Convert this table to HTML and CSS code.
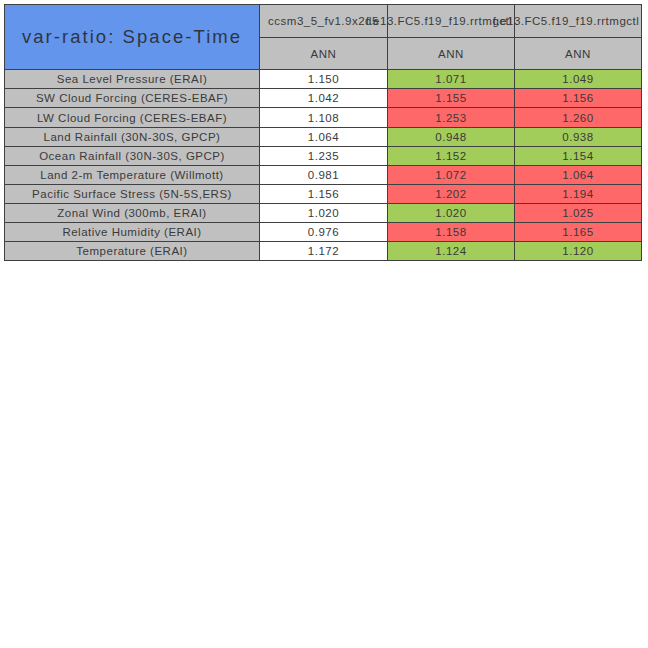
FILE: index.html
```html
<!DOCTYPE html>
<html>
<head>
<meta charset="utf-8">
<link rel="stylesheet" href="styles.css">
</head>
<body>
<div class="frame">
<div class="grid">
  <div class="cell title">var-ratio: Space-Time</div>
  <div class="cell gray">ccsm3_5_fv1.9x2d5</div>
  <div class="cell gray"><span class="long">f.e13.FC5.f19_f19.rrtmgctl</span></div>
  <div class="cell gray"><span class="long">f.e13.FC5.f19_f19.rrtmgctl</span></div>
  <div class="cell gray">ANN</div>
  <div class="cell gray">ANN</div>
  <div class="cell gray">ANN</div>

  <div class="cell gray">Sea Level Pressure (ERAI)</div><div class="cell">1.150</div><div class="cell good">1.071</div><div class="cell good">1.049</div>
  <div class="cell gray">SW Cloud Forcing (CERES-EBAF)</div><div class="cell">1.042</div><div class="cell bad">1.155</div><div class="cell bad">1.156</div>
  <div class="cell gray">LW Cloud Forcing (CERES-EBAF)</div><div class="cell">1.108</div><div class="cell bad">1.253</div><div class="cell bad">1.260</div>
  <div class="cell gray">Land Rainfall (30N-30S, GPCP)</div><div class="cell">1.064</div><div class="cell good">0.948</div><div class="cell good">0.938</div>
  <div class="cell gray">Ocean Rainfall (30N-30S, GPCP)</div><div class="cell">1.235</div><div class="cell good">1.152</div><div class="cell good">1.154</div>
  <div class="cell gray">Land 2-m Temperature (Willmott)</div><div class="cell">0.981</div><div class="cell bad">1.072</div><div class="cell bad">1.064</div>
  <div class="cell gray">Pacific Surface Stress (5N-5S,ERS)</div><div class="cell">1.156</div><div class="cell bad">1.202</div><div class="cell bad">1.194</div>
  <div class="cell gray">Zonal Wind (300mb, ERAI)</div><div class="cell">1.020</div><div class="cell good">1.020</div><div class="cell bad">1.025</div>
  <div class="cell gray">Relative Humidity (ERAI)</div><div class="cell">0.976</div><div class="cell bad">1.158</div><div class="cell bad">1.165</div>
  <div class="cell gray">Temperature (ERAI)</div><div class="cell">1.172</div><div class="cell good">1.124</div><div class="cell good">1.120</div>
</div>
</div>
</body>
</html>
```
FILE: styles.css
```css
html, body {
  margin: 0;
  padding: 0;
  background: #ffffff;
}

.frame {
  width: 642px;
  overflow: hidden;
  padding: 4px 0 0 4px;
  box-sizing: border-box;
}

.grid {
  display: grid;
  width: 638px;
  box-sizing: border-box;
  grid-template-columns: 255px 128px 127px 127px;
  grid-template-rows: 33px 32px 19px 19px 20px 19px 19px 19px 19px 19px 19px 19px;
  border-top: 1px solid #404040;
  border-left: 1px solid #404040;
  font-family: "Liberation Sans", Arial, sans-serif;
  font-size: 11.5px;
  letter-spacing: 0.5px;
  color: #3a3a3a;
}

.cell {
  display: flex;
  align-items: center;
  justify-content: center;
  box-sizing: border-box;
  border-right: 1px solid #404040;
  border-bottom: 1px solid #404040;
  white-space: nowrap;
  background: #ffffff;
  min-width: 0;
}

.title {
  grid-row: span 2;
  background: #6495ed;
  font-size: 18.5px;
  letter-spacing: 2.05px;
  color: #2f3540;
}

.long {
  padding-right: 24px;
}

.gray { background: #c0c0c0; }
.good { background: #a2cd5a; }
.bad { background: #ff6868; }
```
